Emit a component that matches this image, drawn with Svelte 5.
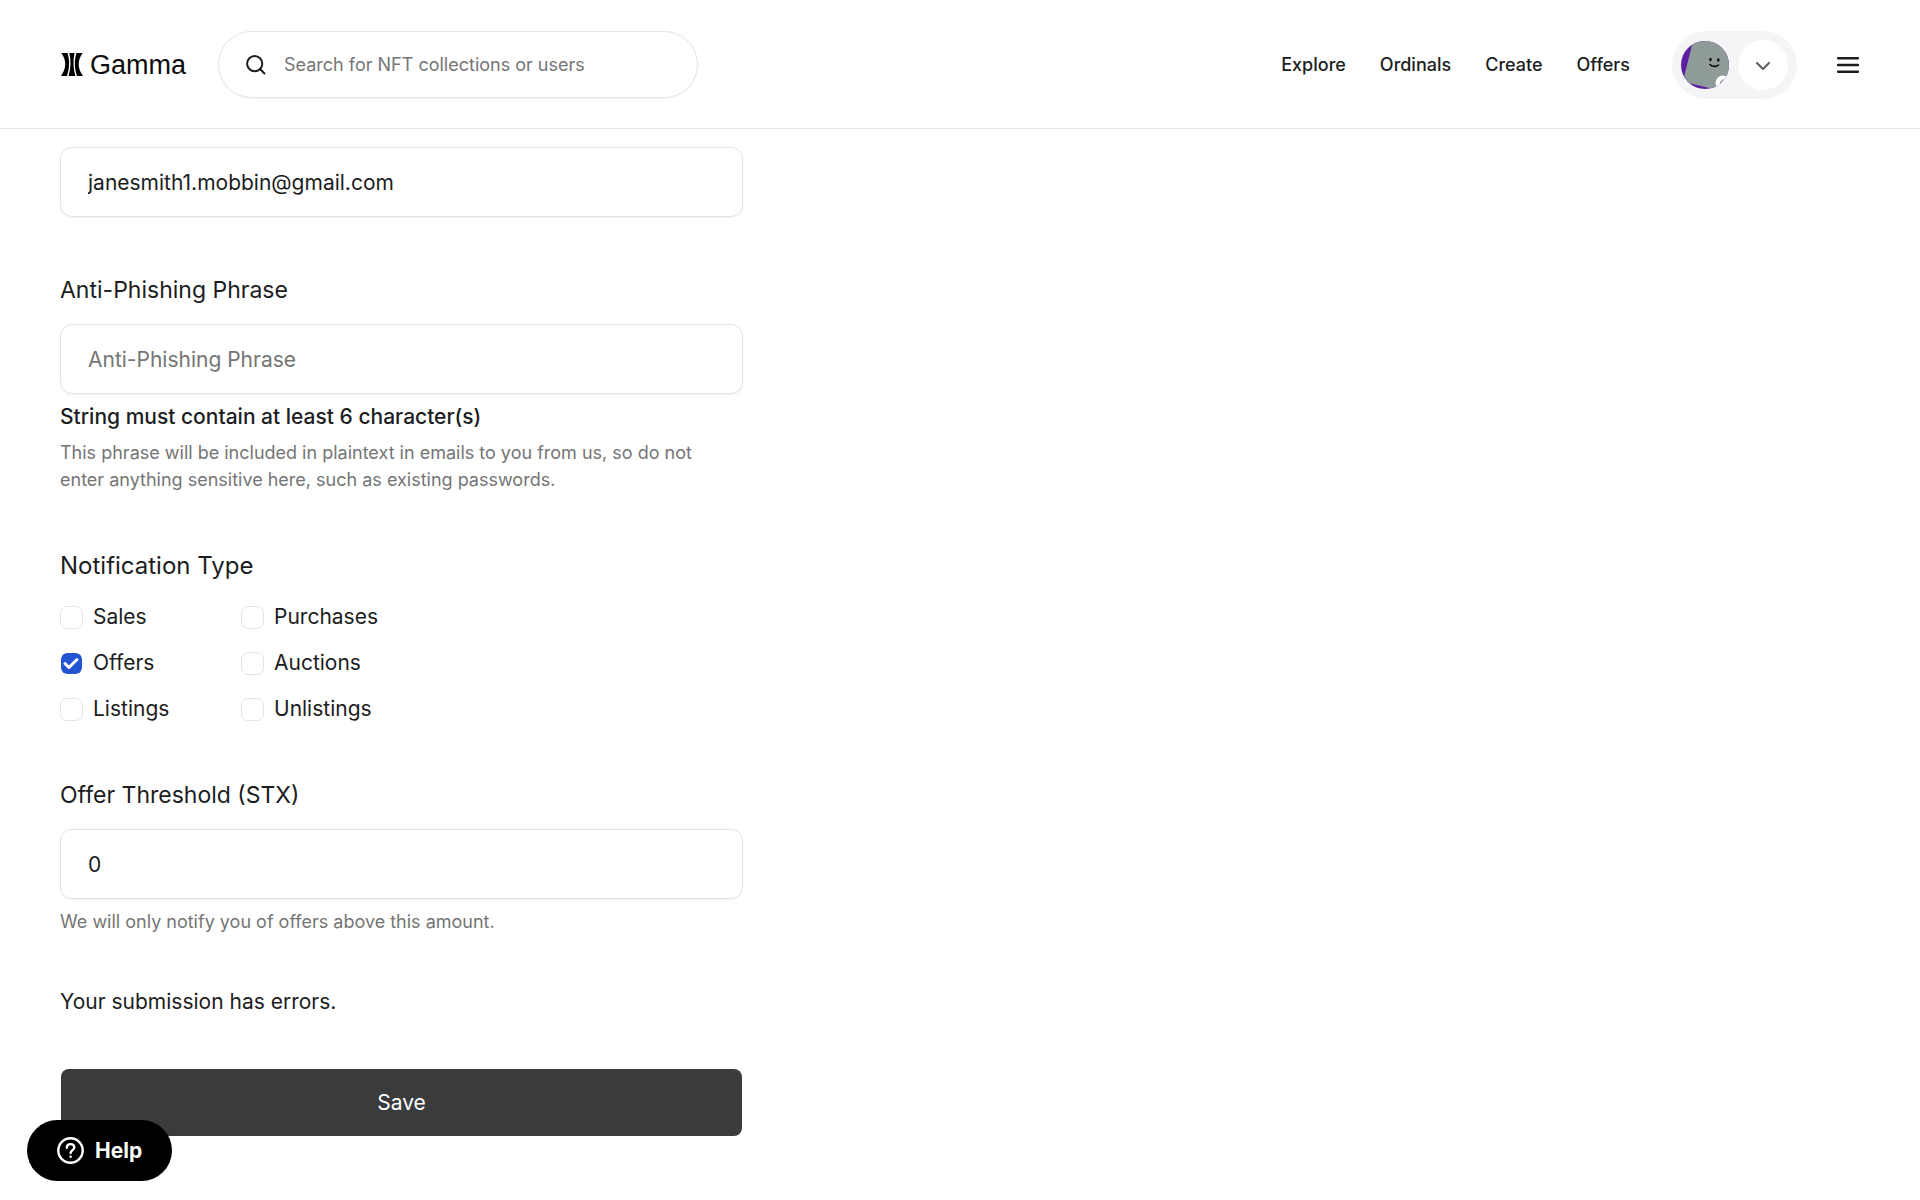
<script>
  let search = $state('');
  let email = $state('janesmith1.mobbin@gmail.com');
  let phrase = $state('');
  let threshold = $state('0');

  const links = ['Explore', 'Ordinals', 'Create', 'Offers'];

  let types = $state([
    { name: 'Sales', checked: false },
    { name: 'Purchases', checked: false },
    { name: 'Offers', checked: true },
    { name: 'Auctions', checked: false },
    { name: 'Listings', checked: false },
    { name: 'Unlistings', checked: false }
  ]);
</script>

<header class="header">
  <a class="logo" href="/" aria-label="Gamma">
    <svg width="22" height="23" viewBox="0 0 22 23" aria-hidden="true">
      <path d="M.3 0h6.200c2.400 7.500 2.200 15.500-.7 23H0C5.600 15.500 5.600 7 .3 0z" />
      <path d="M21.700 0h-6.200c-2.400 7.500-2.200 15.500.7 23H22c-5.600-7.500-5.600-16-.3-23z" />
      <path d="M8.400 0h5.200c-1.700 7.500-1.500 15.500.9 23h-7c2.400-7.500 2.600-15.500.9-23z" />
    </svg>
    <span>Gamma</span>
  </a>

  <form class="search" role="search">
    <svg width="20" height="20" viewBox="0 0 20 20" aria-hidden="true">
      <circle cx="8.7" cy="8.7" r="7.6" />
      <path d="M14 14l4.5 4.5" />
    </svg>
    <input
      type="search"
      aria-label="Search for NFT collections or users"
      placeholder="Search for NFT collections or users"
      bind:value={search}
    />
  </form>

  <nav class="nav">
    {#each links as link}
      <a href="/{link.toLowerCase()}">{link}</a>
    {/each}
  </nav>

  <div class="account">
    <svg class="avatar" width="48" height="48" viewBox="0 0 48 48" role="img" aria-label="Profile">
      <defs>
        <clipPath id="avatar-clip"><circle cx="24" cy="24" r="24" /></clipPath>
      </defs>
      <g clip-path="url(#avatar-clip)">
        <rect width="48" height="48" fill="#5b1fa0" />
        <path d="M12 0h36v48H32L8 42 3 36z" fill="#8f9b98" />
        <ellipse cx="29.5" cy="18.5" rx="1.2" ry="1.7" />
        <ellipse cx="37.3" cy="19" rx="1.2" ry="1.7" />
        <path d="M29 23.5c2 2.3 6 2.5 8.5.5" fill="none" stroke="#000" stroke-width="1.5" stroke-linecap="round" />
        <circle cx="42" cy="42" r="7.5" fill="#fff" />
        <path d="M39.5 42c.5-2 1.5-3 3-3" fill="none" stroke="#666" />
      </g>
    </svg>
    <button class="toggle" aria-label="Account menu">
      <svg width="14" height="9" viewBox="0 0 14 9" aria-hidden="true">
        <path d="M1 1l6 6 6-6" />
      </svg>
    </button>
  </div>

  <button class="menu" aria-label="Menu">
    <svg width="22" height="16" viewBox="0 0 22 16" aria-hidden="true">
      <path d="M1 1.2h20M1 8h20M1 14.8h20" />
    </svg>
  </button>
</header>

<main>
  <form class="settings" novalidate>
    <div class="group">
      <input class="field" type="email" aria-label="Email" bind:value={email} />
    </div>

    <div class="group">
      <label class="title" for="phrase">Anti-Phishing Phrase</label>
      <input class="field" id="phrase" type="text" placeholder="Anti-Phishing Phrase" bind:value={phrase} />
      <p class="error">String must contain at least 6 character(s)</p>
      <p class="hint">
        This phrase will be included in plaintext in emails to you from us, so do not enter anything
        sensitive here, such as existing passwords.
      </p>
    </div>

    <div class="group" role="group" aria-labelledby="types-title">
      <h2 class="title" id="types-title">Notification Type</h2>
      <div class="types">
        {#each types as type}
          <label class="type">
            <input type="checkbox" bind:checked={type.checked} />
            <svg width="18" height="18" viewBox="0 0 18 18" aria-hidden="true">
              <path d="M3 9.5l4 4 8-8" />
            </svg>
            <span>{type.name}</span>
          </label>
        {/each}
      </div>
    </div>

    <div class="group">
      <label class="title" for="threshold">Offer Threshold (STX)</label>
      <input class="field" id="threshold" type="text" inputmode="decimal" bind:value={threshold} />
      <p class="hint">We will only notify you of offers above this amount.</p>
    </div>

    <p class="summary">Your submission has errors.</p>

    <button class="save" type="submit">Save</button>
  </form>
</main>

<button class="help">
  <svg width="27" height="27" viewBox="0 0 27 27" aria-hidden="true">
    <circle cx="13.5" cy="13.5" r="12.2" />
    <path d="M9.8 10.8c0-2.300 1.600-3.700 3.800-3.700s3.700 1.400 3.700 3.300c0 2.600-3.700 2.800-3.700 5.600" />
    <path d="M13.6 19.6v.2" />
  </svg>
  <span>Help</span>
</button>

<style>
  :global(body) {
    background: #fff;
    color: #1c1d1e;
    font-family: Inter, 'Liberation Sans', sans-serif;
    font-size: 21px;
  }

  input,
  button {
    font: inherit;
    color: inherit;
  }

  button {
    border: none;
    padding: 0;
    cursor: pointer;
  }

  p,
  h2 {
    margin: 0;
  }

  a {
    color: inherit;
    text-decoration: none;
  }

  .header {
    display: flex;
    align-items: center;
    height: 127px;
    padding: 1px 61px 0;
    border-bottom: 1px solid #e4e4e6;
  }

  .logo {
    display: flex;
    align-items: center;
    gap: 7px;
    width: 125px;
    margin-right: 32px;
    color: #0d0d0d;
    font-family: 'Liberation Sans', Arial, sans-serif;
    font-size: 27px;
    line-height: 30px;
  }

  .search {
    display: flex;
    align-items: center;
    gap: 18px;
    box-sizing: border-box;
    width: 480px;
    height: 67px;
    padding: 0 27px;
    border: 1px solid #e4e4e6;
    border-radius: 34px;
    box-shadow: 0 1px 2px rgba(0, 0, 0, 0.05);
  }

  .search svg {
    flex: none;
    fill: none;
    stroke: #1c1d1e;
    stroke-width: 2;
    stroke-linecap: round;
  }

  .search input {
    flex: 1;
    min-width: 0;
    padding: 0;
    border: none;
    outline: none;
    background: none;
    font-size: 18px;
  }

  input::placeholder {
    color: #757575;
    opacity: 1;
  }

  .nav {
    display: flex;
    gap: 34px;
    margin-left: auto;
    font-size: 18px;
    font-weight: 500;
  }

  .account {
    display: flex;
    align-items: center;
    gap: 9px;
    margin-left: 42px;
    padding: 9px;
    border-radius: 34px;
    background: #f5f5f7;
  }

  .avatar {
    display: block;
  }

  .toggle {
    display: grid;
    place-items: center;
    width: 50px;
    height: 50px;
    border-radius: 50%;
    background: #fff;
  }

  .toggle svg {
    margin-top: 3px;
    fill: none;
    stroke: #5c5d60;
    stroke-width: 2;
    stroke-linecap: round;
    stroke-linejoin: round;
  }

  .menu {
    display: grid;
    margin-left: 40px;
    background: none;
  }

  .menu svg {
    fill: none;
    stroke: #1c1d1e;
    stroke-width: 2.4;
    stroke-linecap: round;
  }

  main {
    padding: 18px 60px 60px;
  }

  .settings {
    display: flex;
    flex-direction: column;
    gap: 54px;
    max-width: 683px;
  }

  .group {
    display: flex;
    flex-direction: column;
  }

  .title {
    margin-bottom: 15px;
    font-size: 23px;
    font-weight: 400;
    line-height: 38px;
  }

  h2.title {
    font-size: 24px;
  }

  .field {
    box-sizing: border-box;
    width: 100%;
    height: 70px;
    padding: 0 27px;
    border: 1px solid #e4e4e6;
    border-radius: 12px;
    outline: none;
    background: #fff;
    box-shadow: 0 1px 2px rgba(0, 0, 0, 0.05);
  }

  .error {
    margin-top: 9px;
    font-weight: 500;
    line-height: 27px;
  }

  .hint {
    max-width: 660px;
    margin-top: 9px;
    color: #757575;
    font-size: 18px;
    line-height: 27px;
  }

  .types {
    display: grid;
    grid-template-columns: 181px 181px;
    row-gap: 20px;
    margin-top: 4px;
  }

  .type {
    display: flex;
    align-items: center;
    gap: 10px;
    line-height: 26px;
    cursor: pointer;
  }

  .type input {
    appearance: none;
    box-sizing: border-box;
    width: 23px;
    height: 23px;
    margin: 0;
    border: 1px solid #e4e4e6;
    border-radius: 7px;
    background: #fff;
  }

  .type input:checked {
    border-color: #fff;
    background: #2355d3;
    background-clip: padding-box;
  }

  .type svg {
    display: none;
    margin-left: -31px;
    margin-right: 3px;
    fill: none;
    stroke: #fff;
    stroke-width: 3;
    stroke-linecap: round;
    stroke-linejoin: round;
    pointer-events: none;
  }

  .type input:checked + svg {
    display: block;
  }

  .summary {
    line-height: 26px;
  }

  .save {
    height: 67px;
    margin: 0 1px;
    border-radius: 8px;
    background: #3a3b3d;
    color: #fff;
  }

  .help {
    position: fixed;
    left: 27px;
    bottom: 19px;
    display: flex;
    align-items: center;
    gap: 11px;
    height: 61px;
    padding: 0 30px;
    border-radius: 31px;
    background: #000;
    color: #fff;
    font-weight: 700;
  }

  .help svg {
    fill: none;
    stroke: #fff;
    stroke-width: 2.4;
    stroke-linecap: round;
  }
</style>
